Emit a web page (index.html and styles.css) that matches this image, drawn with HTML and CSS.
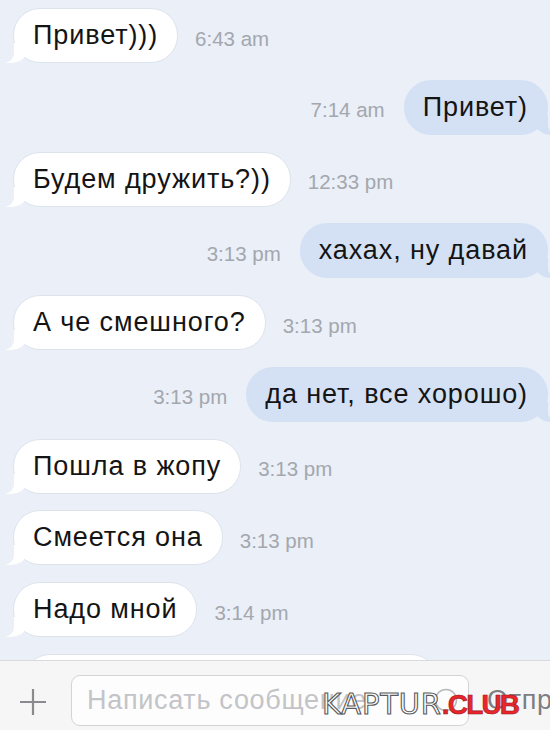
FILE: index.html
```html
<!DOCTYPE html>
<html lang="ru">
<head>
<meta charset="utf-8">
<title>Чат</title>
<link rel="stylesheet" href="styles.css">
</head>
<body>
<div class="screen">
  <div class="chat">
    <div class="row in"><div class="bubble">Привет)))</div><span class="time">6:43 am</span></div>
    <div class="row out"><span class="time">7:14 am</span><div class="bubble">Привет)</div></div>
    <div class="row in"><div class="bubble">Будем дружить?))</div><span class="time">12:33 pm</span></div>
    <div class="row out"><span class="time">3:13 pm</span><div class="bubble">хахах, ну давай</div></div>
    <div class="row in"><div class="bubble">А че смешного?</div><span class="time">3:13 pm</span></div>
    <div class="row out"><span class="time">3:13 pm</span><div class="bubble">да нет, все хорошо)</div></div>
    <div class="row in"><div class="bubble">Пошла в жопу</div><span class="time">3:13 pm</span></div>
    <div class="row in"><div class="bubble">Смеется она</div><span class="time">3:13 pm</span></div>
    <div class="row in"><div class="bubble">Надо мной</div><span class="time">3:14 pm</span></div>
    <div class="row in peek"><div class="bubble wide"></div></div>
  </div>
  <div class="composer">
    <svg class="plus" width="28" height="28" viewBox="0 0 28 28" aria-hidden="true">
      <path d="M14 1v26M1 14h26" stroke="#8a8a8f" stroke-width="2.2" fill="none"/>
    </svg>
    <div class="field">
      <span class="placeholder">Написать сообщение</span>
      <svg class="smile" width="24" height="24" viewBox="0 0 24 24" aria-hidden="true">
        <circle cx="12" cy="12" r="10.5" stroke="#b8b8bd" stroke-width="1.5" fill="none"/>
      </svg>
    </div>
    <span class="send">Отправить</span>
  </div>
  <div class="watermark"><span class="wm-a">KAPTUR</span><span class="wm-b">.CLUB</span></div>
</div>
</body>
</html>
```

FILE: styles.css
```css
* { box-sizing: border-box; }
html, body { margin: 0; padding: 0; }
body {
  font-family: "Liberation Sans", Arial, sans-serif;
  background: #eaeff8;
}
.screen {
  position: relative;
  width: 550px;
  height: 730px;
  display: flex;
  flex-direction: column;
  overflow: hidden;
  background: #eaeff8;
}
.chat {
  flex: 1;
  min-height: 0;
  overflow: hidden;
  display: flex;
  flex-direction: column;
  gap: 16.75px;
  padding: 8px 2px 0 13px;
}
.row {
  display: flex;
  align-items: center;
  flex-shrink: 0;
  height: 55px;
}
.row.in { justify-content: flex-start; gap: 17px; }
.row.out { justify-content: flex-end; gap: 19px; }
.bubble {
  position: relative;
  z-index: 0;
  height: 55px;
  display: flex;
  align-items: center;
  padding: 0 19px 0 19px;
  border-radius: 27px;
  font-size: 27px;
  letter-spacing: 0.9px;
  color: #141414;
  white-space: nowrap;
}
.in .bubble {
  background: #ffffff;
  border: 1px solid #dde3ed;
}
.out .bubble {
  background: #d4e1f5;
  padding: 0 20px 0 19px;
}
.bubble::before,
.bubble::after {
  content: "";
  position: absolute;
  bottom: -1px;
  height: 20px;
  z-index: -1;
}
.in .bubble::before {
  left: -8px;
  width: 22px;
  background: #ffffff;
  border-bottom-right-radius: 17px 15px;
}
.in .bubble::after {
  left: -26px;
  width: 26px;
  background: #eaeff8;
  border-bottom-right-radius: 10px;
}
.out .bubble::before {
  right: -8px;
  width: 22px;
  bottom: 0;
  background: #d4e1f5;
  border-bottom-left-radius: 17px 15px;
}
.out .bubble::after {
  right: -26px;
  width: 26px;
  bottom: 0;
  background: #eaeff8;
  border-bottom-left-radius: 10px;
}
.time {
  font-size: 20.5px;
  color: #a4a7ad;
  padding-top: 6px;
  white-space: nowrap;
}
.peek .bubble.wide {
  width: 415px;
  margin-left: 10px;
}
.composer {
  flex: 0 0 70px;
  display: flex;
  align-items: center;
  gap: 24px;
  padding: 9px 0 0 19px;
  background: #f6f6f7;
  border-top: 1px solid #d9dade;
  white-space: nowrap;
}
.plus { flex-shrink: 0; margin-top: 4px; }
.field {
  flex: 0 0 398px;
  height: 51px;
  display: flex;
  align-items: center;
  justify-content: space-between;
  padding: 0 10px 0 15px;
  background: #fdfdfd;
  border: 1px solid #d3d4d8;
  border-radius: 9px;
  overflow: hidden;
}
.placeholder {
  font-size: 27px;
  letter-spacing: 0.7px;
  color: #c3c4c8;
  overflow: hidden;
}
.smile { flex-shrink: 0; }
.send {
  margin-left: -6px;
  font-size: 27px;
  letter-spacing: 0.7px;
  color: #7d7e82;
}
.watermark {
  position: absolute;
  left: 322px;
  top: 690px;
  font-family: "DejaVu Sans", sans-serif;
  font-size: 29px;
  line-height: 1;
  white-space: nowrap;
}
.wm-a {
  color: #ffffff;
  letter-spacing: 0.8px;
  -webkit-text-stroke: 1.1px #5a5a5a;
}
.wm-b {
  font-family: "Liberation Sans", Arial, sans-serif;
  font-size: 28px;
  letter-spacing: -1.8px;
  color: #e8262b;
  font-weight: bold;
  -webkit-text-stroke: 0.6px #9a1418;
}
```
